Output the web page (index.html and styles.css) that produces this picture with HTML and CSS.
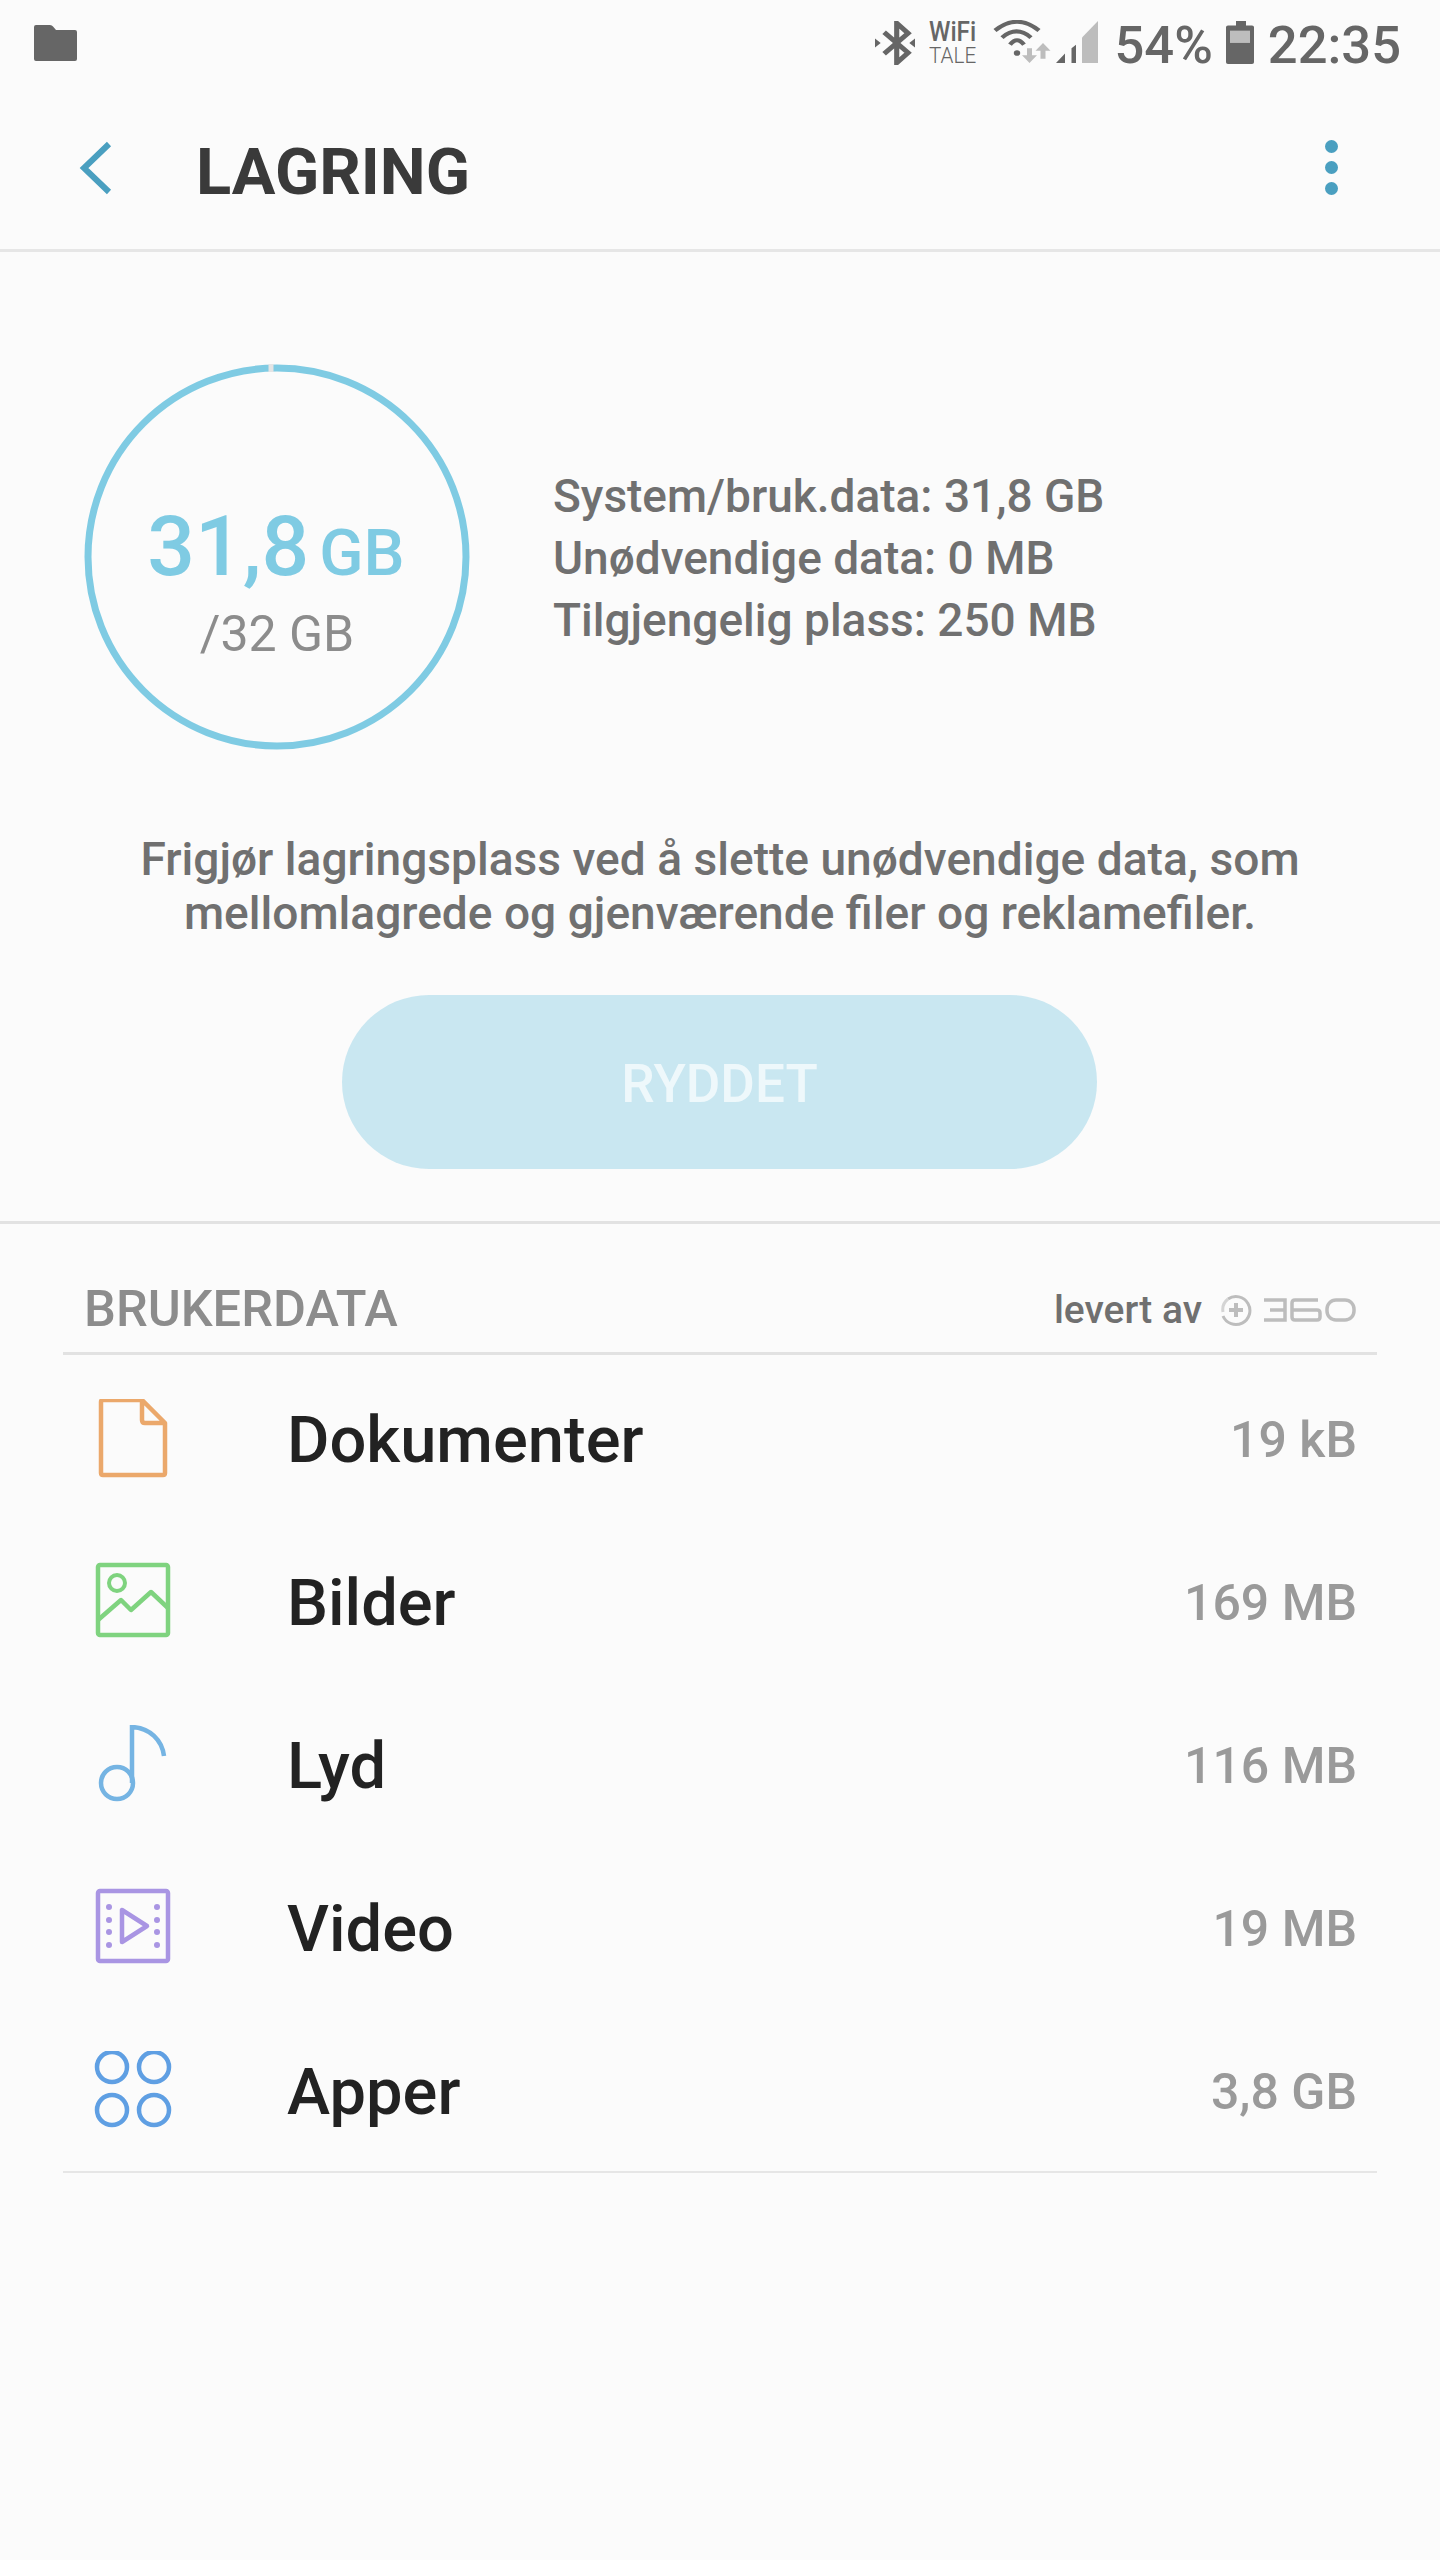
FILE: index.html
```html
<!DOCTYPE html>
<html lang="nb">
<head>
  <meta charset="UTF-8" />
  <meta name="viewport" content="width=device-width, initial-scale=1.0"/>
  <title>Lagring</title>
  <link rel="stylesheet" href="styles.css">
</head>
<body>
  <div class="status-bar">
    <svg class="folder-icon" width="43" height="36" viewBox="0 0 43 36"><path d="M2 0h14q2 0 3 1.500l3 3.500h19q2 0 2 2v27q0 2-2 2H2q-2 0-2-2V2q0-2 2-2z" fill="#666"/></svg>
    <div class="status-right">
      <svg class="bt-icon" width="40" height="44" viewBox="0 0 35 43" preserveAspectRatio="none">
        <path d="M8 11l21 20-10 10V2l10 10L8 32" fill="none" stroke="#666" stroke-width="4.500"/>
        <path d="M0 17l5 4.500-5 4.500zM35 17l-5 4.500 5 4.500z" fill="#666"/>
      </svg>
      <div class="wifi-label"><span class="wifi-top">WiFi</span><span class="wifi-bottom">TALE</span></div>
      <svg class="net-icon" width="105" height="44" viewBox="0 0 105 50" preserveAspectRatio="none">
        <path d="M2 12Q24-8 46 12M9 20Q23.500 6 38 20M17 28Q24 18 31 28" fill="none" stroke="#666" stroke-width="4.500"/>
        <circle cx="24" cy="37.500" r="3.200" fill="#666"/>
        <path d="M34 32h5v8h5l-7.500 9-7.500-9h5zM47.500 44h5v-9h5l-7.500-9-7.500 9h5z" fill="#bdbdbd"/>
        <path d="M63 49l9-11v11zM78.500 49V32l4.500-4v21z" fill="#666"/>
        <path d="M89 49V20L105 1v48z" fill="#bdbdbd"/>
      </svg>
      <span class="status-pct">54%</span>
      <svg class="batt-icon" width="28" height="43" viewBox="0 0 28 49" preserveAspectRatio="none">
        <path d="M10 0h10v5h6q2 0 2 2v40q0 2-2 2H2q-2 0-2-2V7q0-2 2-2h8z" fill="#666"/>
        <rect x="4" y="11" width="20" height="14" fill="#bdbdbd"/>
      </svg>
      <span class="status-time">22:35</span>
    </div>
  </div>

  <header class="top-bar">
    <svg class="back-icon" width="40" height="60" viewBox="0 0 40 60"><path d="M35 6L10 30l25 24" fill="none" stroke="#4a9fc0" stroke-width="6"/></svg>
    <h1>LAGRING</h1>
    <div class="menu-dots"><span></span><span></span><span></span></div>
  </header>

  <section class="summary">
    <div class="usage-row">
      <div class="ring">
        <svg class="ring-svg" width="386" height="386" viewBox="0 0 386 386">
          <circle cx="193" cy="193" r="189" fill="none" stroke="#7fcbe3" stroke-width="7"/>
          <rect x="184.500" y="0" width="5" height="8" fill="#e4e4e4"/>
        </svg>
        <div class="ring-used"><span class="ring-num">31,8</span><span class="ring-unit">GB</span></div>
        <div class="ring-total">/32 GB</div>
      </div>
      <div class="usage-text">
        <div>System/bruk.data: 31,8 GB</div>
        <div>Unødvendige data: 0 MB</div>
        <div>Tilgjengelig plass: 250 MB</div>
      </div>
    </div>
    <p class="hint">Frigjør lagringsplass ved å slette unødvendige data, som<br>mellomlagrede og gjenværende filer og reklamefiler.</p>
    <button class="clean-btn">RYDDET</button>
  </section>

  <section class="user-data">
    <div class="section-head">
      <span class="section-title">BRUKERDATA</span>
      <span class="provider">levert av
        <svg class="logo-360" width="136" height="34" viewBox="0 0 136 34">
          <path d="M8 6a14 14 0 1 1-5 17" fill="none" stroke="#bdbdbd" stroke-width="3"/>
          <path d="M3 19a13.500 13.500 0 0 1 5-13" fill="none" stroke="#d4d4d4" stroke-width="3"/>
          <path d="M16 10v14M9 17h14" stroke="#bdbdbd" stroke-width="4"/>
          <g fill="none" stroke="#bdbdbd" stroke-width="3.500">
            <path d="M44 7h21v20H44M50 17h15"/>
            <path d="M98 7H75q-3 0-3 3v14q0 3 3 3h22q3 0 3-3v-4q0-3-3-3H72"/>
            <rect x="107" y="7" width="27" height="20" rx="9"/>
          </g>
        </svg>
      </span>
    </div>
    <ul class="file-list">
      <li>
        <span class="file-icon">
          <svg width="80" height="81" viewBox="0 0 80 81"><path d="M9 1h39l23 23v50q0 2-2 2H9q-2 0-2-2V3q0-2 2-2zM48 1v20q0 3 3 3h20" fill="none" stroke="#eba86b" stroke-width="4.500" stroke-linejoin="round"/></svg>
        </span>
        <span class="file-name">Dokumenter</span><span class="file-size">19 kB</span>
      </li>
      <li>
        <span class="file-icon">
          <svg width="80" height="81" viewBox="0 0 80 81"><rect x="4" y="3" width="70" height="70" rx="2" fill="none" stroke="#7fd37f" stroke-width="4.500"/><circle cx="23" cy="21" r="8" fill="none" stroke="#7fd37f" stroke-width="4"/><path d="M4 58l23-20 10 10 20-18 17 16" fill="none" stroke="#7fd37f" stroke-width="4.500" stroke-linejoin="round"/></svg>
        </span>
        <span class="file-name">Bilder</span><span class="file-size">169 MB</span>
      </li>
      <li>
        <span class="file-icon">
          <svg width="80" height="81" viewBox="0 0 80 81"><circle cx="23" cy="58" r="16" fill="none" stroke="#75b4e3" stroke-width="4.500"/><path d="M38 58V2C56 3 68 15 70 31" fill="none" stroke="#75b4e3" stroke-width="4.500"/></svg>
        </span>
        <span class="file-name">Lyd</span><span class="file-size">116 MB</span>
      </li>
      <li>
        <span class="file-icon">
          <svg width="80" height="81" viewBox="0 0 80 81"><rect x="4" y="3" width="70" height="70" rx="2" fill="none" stroke="#a995e3" stroke-width="4.500"/><path d="M28 22v32l25-16z" fill="none" stroke="#a995e3" stroke-width="4.500" stroke-linejoin="round"/><g fill="#a995e3"><circle cx="15" cy="19" r="3"/><circle cx="15" cy="32" r="3"/><circle cx="15" cy="44" r="3"/><circle cx="15" cy="57" r="3"/><circle cx="63" cy="19" r="3"/><circle cx="63" cy="32" r="3"/><circle cx="63" cy="44" r="3"/><circle cx="63" cy="57" r="3"/></g></svg>
        </span>
        <span class="file-name">Video</span><span class="file-size">19 MB</span>
      </li>
      <li>
        <span class="file-icon">
          <svg width="80" height="81" viewBox="0 0 80 81"><g fill="none" stroke="#5f9fe3" stroke-width="4.500"><circle cx="18" cy="16" r="15"/><circle cx="60" cy="16" r="15"/><circle cx="18" cy="59" r="15"/><circle cx="60" cy="59" r="15"/></g></svg>
        </span>
        <span class="file-name">Apper</span><span class="file-size">3,8 GB</span>
      </li>
    </ul>
  </section>
</body>
</html>
```

FILE: styles.css
```css
body {
  margin: 0;
  height: 2560px;
  background-color: #fbfbfb;
  font-family: Roboto, "Liberation Sans", sans-serif;
  color: #666;
  overflow: hidden;
}

.status-bar {
  display: flex;
  justify-content: space-between;
  height: 86px;
  padding: 21px 39px 0 34px;
  box-sizing: border-box;
}

.folder-icon {
  margin-top: 4px;
}

.status-right {
  display: flex;
  align-items: flex-start;
}

.wifi-label {
  display: flex;
  flex-direction: column;
  width: 47px;
  margin-left: 14px;
  line-height: 22px;
}

.wifi-top,
.wifi-bottom {
  transform-origin: left;
  white-space: nowrap;
}

.wifi-top {
  font-size: 27px;
  font-weight: 500;
  transform: scaleX(0.9);
}

.wifi-bottom {
  margin-top: 2px;
  font-size: 22px;
  font-weight: 300;
  transform: scaleX(0.94);
}

.net-icon {
  margin-top: -1px;
  margin-left: 17px;
}

.status-pct,
.status-time {
  font-size: 52.500px;
  font-weight: 500;
  line-height: 48px;
}

.status-pct {
  margin-left: 16px;
}

.batt-icon {
  margin-left: 13px;
}

.status-time {
  margin-left: 14px;
}

.top-bar {
  display: flex;
  align-items: center;
  height: 163px;
  padding: 0 38px 0 74px;
  border-bottom: 3px solid #e6e6e6;
}

h1 {
  margin: 8px 0 0 82px;
  flex: 1;
  font-size: 65px;
  font-weight: 700;
  color: #3a3a3a;
}

.menu-dots {
  display: flex;
  flex-direction: column;
  gap: 8px;
  margin-right: 64px;
}

.menu-dots span {
  width: 13px;
  height: 13px;
  border-radius: 50%;
  background-color: #4a9fc0;
}

.summary {
  display: flex;
  flex-direction: column;
  align-items: center;
  height: 972px;
  border-bottom: 3px solid #e2e2e2;
  box-sizing: border-box;
}

.usage-row {
  display: flex;
  align-items: center;
  align-self: flex-start;
  margin: 112px 0 0 84px;
}

.ring {
  position: relative;
  display: flex;
  flex-direction: column;
  align-items: center;
  width: 386px;
  height: 386px;
}

.ring-svg {
  position: absolute;
  top: 0;
  left: 0;
}

.ring-used {
  margin: 147px 0 0 -2px;
  color: #7fcbe3;
  font-weight: 500;
  line-height: 72px;
}

.ring-num {
  font-size: 84px;
}

.ring-unit {
  font-size: 65px;
  margin-left: 10px;
}

.ring-total {
  font-size: 50px;
  color: #8c8c8c;
  line-height: 56px;
}

.usage-text {
  margin-left: 83px;
  padding-top: 1px;
  font-size: 46px;
  font-weight: 500;
  line-height: 62px;
  color: #707070;
}

.hint {
  margin: 82px 0 0;
  font-size: 46.100px;
  font-weight: 500;
  line-height: 54px;
  text-align: center;
  color: #707070;
}

.clean-btn {
  width: 755px;
  height: 174px;
  margin: 55px 0 0 -1px;
  padding-top: 4px;
  border: none;
  border-radius: 87px;
  background-color: #c9e7f1;
  color: #eef8fb;
  font-family: inherit;
  font-size: 53px;
  font-weight: 500;
}

.user-data {
  padding: 0 63px;
}

.section-head {
  display: flex;
  justify-content: space-between;
  align-items: center;
  height: 131px;
  padding: 44px 21px 0 21px;
  border-bottom: 3px solid #e2e2e2;
  box-sizing: border-box;
}

.section-title {
  margin-top: -3px;
  font-size: 50.500px;
  font-weight: 500;
  color: #8c8c8c;
}

.provider {
  display: flex;
  align-items: center;
  gap: 18px;
  font-size: 39px;
  font-weight: 500;
  color: #707070;
}

.file-list {
  margin: 0;
  padding: 3px 0 0;
  list-style: none;
  border-bottom: 2px solid #e6e6e6;
}

.file-list li {
  display: flex;
  align-items: center;
  height: 163px;
  padding: 0 20px 0 31px;
}

.file-list li:last-child {
  height: 159px;
  padding-top: 2px;
}

.file-icon {
  display: flex;
  width: 193px;
}

.file-name {
  flex: 1;
  font-size: 65px;
  font-weight: 500;
  color: #222;
}

.file-size {
  font-size: 50px;
  font-weight: 500;
  color: #9a9a9a;
}
```
